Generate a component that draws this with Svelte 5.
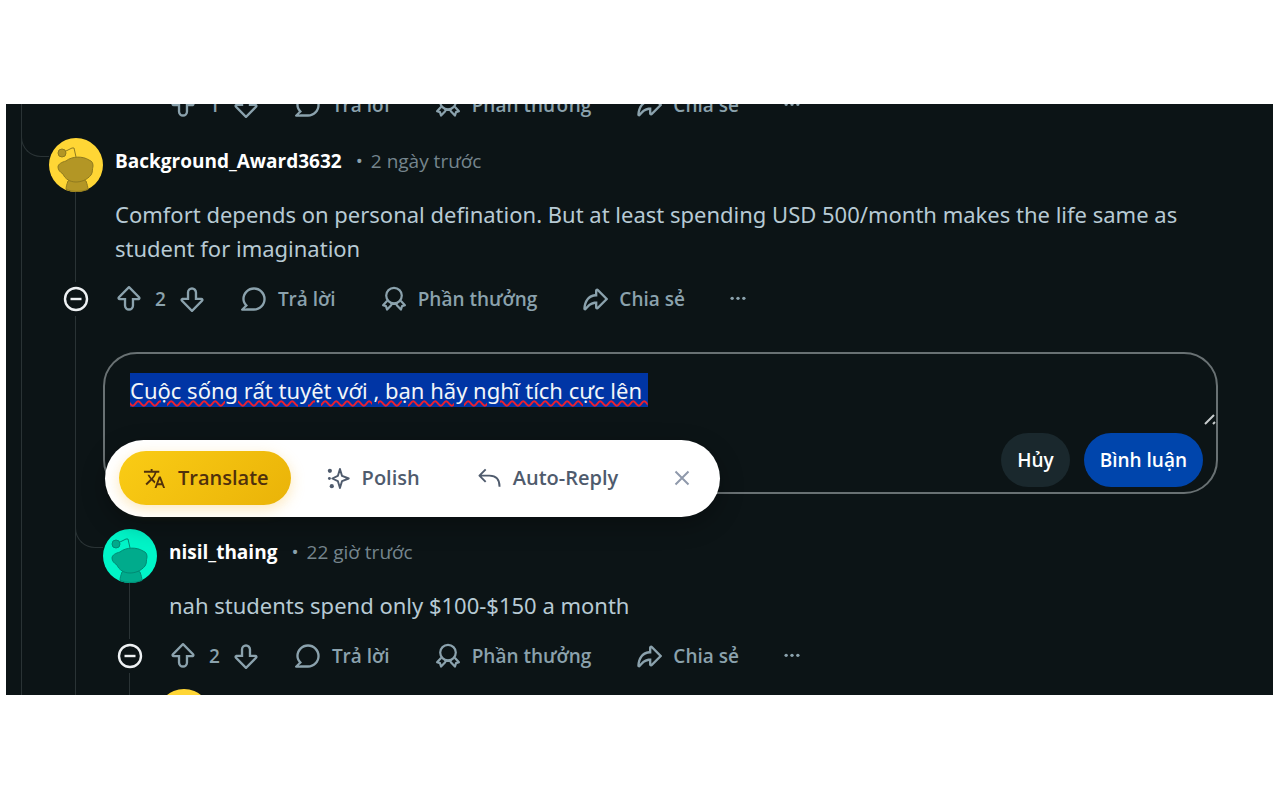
<script>
	import { onMount } from "svelte";

	const replies = [
		{ name: "Background_Award3632", time: "2 ngày trước", tone: "yellow", votes: 2 },
		{ name: "nisil_thaing", time: "22 giờ trước", tone: "teal", votes: 2 }
	];

	let draft = $state("Cuộc sống rất tuyệt với , bạn hãy nghĩ tích cực lên ");
	let showTools = $state(true);
	let input;

	onMount(() => {
		input.focus();
		input.select();
	});
</script>

<svelte:head>
	<title>Thread</title>
</svelte:head>

{#snippet avatar(tone)}
	<svg class="avatar {tone}" viewBox="0 0 54 54" aria-hidden="true">
		<circle class="disc" cx="27" cy="27" r="27" />
		<g class="snoo">
			<path d="M19 43c1-2 16-2 18 0 1 3 2 6 2 8.500q-11 4-22 0c0-3 1-5.500 2-8.500z" />
			<path d="M9 29c0-3 4-5 8-6 6-5 17-5 23-1 3 1 4 3 4 6-1 4 0 6-2 9-4 5-10 7-15 7-6 0-11-3-13-8-3-2-5-4-5-7z" />
			<circle cx="13" cy="15" r="4" />
			<path class="antenna" d="M17 13l6-3 2 0 2 9" />
		</g>
	</svg>
{/snippet}

{#snippet arrow(down)}
	<svg class="icon" class:down viewBox="0 0 20 20" aria-hidden="true">
		<path d="M10 19a3.966 3.966 0 01-3.960-3.962V10.980H2.838a1.731 1.731 0 01-1.605-1.073 1.734 1.734 0 01.377-1.895L9.364.254a.925.925 0 011.272 0l7.754 7.759c.498.499.646 1.242.376 1.894-.270.652-.900 1.073-1.605 1.073h-3.202v4.058A3.965 3.965 0 0110 19zM2.989 9.179H7.840v5.731c0 1.130.810 2.163 1.934 2.278a2.163 2.163 0 002.386-2.150V9.179h4.851L10 2.163 2.989 9.179z" />
	</svg>
{/snippet}

{#snippet actions(votes)}
	<div class="actions">
		<div class="votes">
			<button aria-label="Upvote">{@render arrow(false)}</button>
			<span>{votes}</span>
			<button aria-label="Downvote">{@render arrow(true)}</button>
		</div>
		<button class="action">
			<svg class="icon" viewBox="0 0 20 20" aria-hidden="true">
				<path d="M10 1a9 9 0 00-9 9c0 1.947.790 3.580 1.935 4.957L.231 17.661A.784.784 0 00.785 19H10a9 9 0 009-9 9 9 0 00-9-9zm0 16.200H6.162c-.994.004-1.907.053-3.045.144l-.076-.188a36.981 36.981 0 002.328-2.087l-1.050-1.263C3.297 12.576 2.800 11.331 2.800 10c0-3.970 3.230-7.200 7.200-7.200s7.200 3.230 7.200 7.200-3.230 7.200-7.200 7.200z" />
			</svg>
			Trả lời
		</button>
		<button class="action">
			<svg class="icon line" viewBox="0 0 20 20" aria-hidden="true">
				<circle cx="10" cy="7.400" r="6" />
				<path d="M4.800 11.300L1.600 14.800l2.200.700.900 2.600 3.500-3.700M15.200 11.300l3.200 3.500-2.200.700-.900 2.600-3.500-3.700M7.200 13.800h5.600" />
			</svg>
			Phần thưởng
		</button>
		<button class="action">
			<svg class="icon" viewBox="0 0 20 20" aria-hidden="true">
				<path d="M12.800 17.524l6.890-6.887a.9.9 0 000-1.273L12.800 2.477a1.640 1.640 0 00-1.782-.349 1.640 1.640 0 00-1.014 1.518v2.593C4.054 6.728 1.192 12.075 1 17.376a1.353 1.353 0 00.862 1.320 1.350 1.350 0 001.531-.364l.334-.381c1.705-1.944 3.323-3.791 6.277-4.103v2.509c0 .667.398 1.262 1.014 1.518a1.638 1.638 0 001.783-.349zm-.994-1.548V12h-.9c-3.969 0-6.162 2.100-8.001 4.161.514-4.011 2.823-8.160 8-8.160h.9V4.024L17.784 10l-5.977 5.976z" />
			</svg>
			Chia sẻ
		</button>
		<button class="more" aria-label="More">
			<svg class="icon" viewBox="0 0 20 20" aria-hidden="true">
				<circle cx="5.500" cy="9.500" r="1.300" />
				<circle cx="10" cy="9.500" r="1.300" />
				<circle cx="14.500" cy="9.500" r="1.300" />
			</svg>
		</button>
	</div>
{/snippet}

{#snippet head(reply)}
	<header>
		<a href="#user">{reply.name}</a>
		<span class="dot">•</span>
		<time>{reply.time}</time>
	</header>
{/snippet}

{#snippet collapse()}
	<button class="collapse" aria-label="Collapse">
		<svg viewBox="0 0 26 26" aria-hidden="true">
			<circle cx="13" cy="13" r="11" />
			<path d="M7.500 13h11" />
		</svg>
	</button>
{/snippet}

<main class="thread">
	<div class="previous">
		{@render actions(1)}
	</div>

	<article class="comment">
		{@render avatar(replies[0].tone)}
		<div class="content">
			{@render head(replies[0])}
			<p>Comfort depends on personal defination. But at least spending USD 500/month makes the life same as student for imagination</p>
		</div>
		{@render collapse()}
		{@render actions(replies[0].votes)}

		<div class="children">
			<form class="composer" onsubmit={(e) => e.preventDefault()}>
				<textarea bind:this={input} bind:value={draft} aria-label="Bình luận" spellcheck="false"></textarea>
				<svg class="grip" viewBox="0 0 12 12" aria-hidden="true">
					<path d="M1 11L10 2M9 11l2-2" />
				</svg>
				<div class="buttons">
					<button type="button" class="cancel">Hủy</button>
					<button type="submit" class="submit">Bình luận</button>
				</div>

				{#if showTools}
					<div class="tools">
						<button type="button" class="tool primary">
							<svg viewBox="0 0 24 24" aria-hidden="true">
								<path class="solid" d="M12.870 15.070l-2.540-2.510.030-.030A17.520 17.520 0 0014.070 6H17V4h-7V2H8v2H1v2h11.170C11.500 7.920 10.440 9.750 9 11.350 8.070 10.320 7.300 9.190 6.690 8h-2c.730 1.630 1.730 3.170 2.980 4.560l-5.090 5.020L4 19l5-5 3.110 3.110.760-2.040zM18.500 10h-2L12 22h2l1.120-3h4.750L21 22h2l-4.500-12zm-2.620 7l1.620-4.330L19.120 17h-3.240z" />
							</svg>
							Translate
						</button>
						<button type="button" class="tool">
							<svg viewBox="0 0 24 24" aria-hidden="true">
								<path d="M13.500 2l2.200 7.300 7 2.700-7 2.700-2.200 7.300-2.200-7.300L5.500 12l5.800-2.700z" />
								<circle class="solid" cx="3" cy="4" r="2.200" />
								<circle class="solid" cx="2.500" cy="12" r="1.500" />
								<circle class="solid" cx="5" cy="20" r="2.200" />
							</svg>
							Polish
						</button>
						<button type="button" class="tool">
							<svg viewBox="0 0 24 24" aria-hidden="true">
								<path d="M8 2.500L1.500 9 8 15.500M1.500 9H12c6.500 0 10.500 4 10.500 11.500" />
							</svg>
							Auto-Reply
						</button>
						<button type="button" class="close" aria-label="Close" onclick={() => (showTools = false)}>
							<svg viewBox="0 0 16 16" aria-hidden="true">
								<path d="M1.500 1.500l13 13M14.500 1.500l-13 13" />
							</svg>
						</button>
					</div>
				{/if}
			</form>

			<article class="comment">
				{@render avatar(replies[1].tone)}
				<div class="content">
					{@render head(replies[1])}
					<p>nah students spend only $100-$150 a month</p>
				</div>
				{@render collapse()}
				{@render actions(replies[1].votes)}

				<div class="children next">
					{@render avatar("yellow")}
				</div>
			</article>
		</div>
	</article>
</main>

<style>
	:global(body) {
		margin: 0;
		background: #fff;
	}

	.thread {
		--bg: #0c1416;
		--rail: #2a3335;
		--muted: #8ba2ad;
		position: relative;
		margin: 104px 7px 0 6px;
		padding: 0 55px 0 43px;
		background: var(--bg);
		color: #b7cad4;
		font-family: "Noto Sans", "Open Sans", sans-serif;
		font-size: 22px;
		line-height: 34px;
		overflow: hidden;
	}

	.thread::before {
		content: "";
		position: absolute;
		left: 15px;
		top: 0;
		bottom: 0;
		width: 1px;
		background: var(--rail);
	}

	button {
		display: flex;
		align-items: center;
		padding: 0;
		border: 0;
		background: none;
		color: inherit;
		font: inherit;
		cursor: pointer;
	}

	.previous {
		margin-top: -32px;
		padding-left: 108px;
	}

	.comment {
		position: relative;
		display: grid;
		grid-template-columns: 54px 1fr;
	}

	/* rail under the avatar and the elbow that joins it to the parent */
	.comment::before {
		content: "";
		position: absolute;
		left: 26px;
		top: 54px;
		bottom: 0;
		width: 1px;
		background: var(--rail);
	}

	.comment::after {
		content: "";
		position: absolute;
		left: -28px;
		top: -2px;
		width: 27px;
		height: 20px;
		border-left: 1px solid var(--rail);
		border-bottom: 1px solid var(--rail);
		border-bottom-left-radius: 20px;
	}

	.avatar {
		position: relative;
		display: block;
		width: 54px;
		height: 54px;
	}

	.yellow .disc {
		fill: #ffd635;
	}

	.yellow .snoo {
		fill: #b39625;
		stroke: #8f7a1f;
	}

	.teal .disc {
		fill: #00f5c8;
	}

	.teal .snoo {
		fill: #00ab8c;
		stroke: #008a74;
	}

	.snoo .antenna {
		fill: none;
	}

	.content {
		padding-left: 12px;
	}

	header {
		display: flex;
		align-items: center;
		height: 46px;
		font-family: "Open Sans", "Noto Sans", sans-serif;
		font-size: 19px;
		color: #75858d;
	}

	header a {
		color: #fff;
		font-weight: 700;
		text-decoration: none;
	}

	.dot {
		margin: 0 8px 0 14px;
		color: var(--muted);
	}

	p {
		margin: 13px 0 1px;
	}

	.actions {
		display: flex;
		align-items: center;
		gap: 11px;
		height: 66px;
		padding-left: 5px;
		color: var(--muted);
		font-family: "Open Sans", "Noto Sans", sans-serif;
		font-size: 19px;
		font-weight: 600;
		white-space: nowrap;
	}

	.votes {
		display: flex;
		align-items: center;
		gap: 13px;
		padding: 0 8px;
	}

	.action {
		gap: 11px;
		padding: 0 17px;
	}

	.more {
		padding: 0 12px;
	}

	.icon {
		width: 26px;
		height: 26px;
		fill: currentColor;
	}

	.icon.down {
		transform: rotate(180deg);
	}

	.icon.line {
		fill: none;
		stroke: currentColor;
		stroke-width: 1.7;
		stroke-linejoin: round;
	}

	.collapse {
		position: relative;
		align-self: center;
		justify-self: center;
		padding: 4px 0;
		background: var(--bg);
	}

	.collapse svg {
		width: 26px;
		height: 26px;
		fill: none;
		stroke: #eef1f3;
		stroke-width: 2.4;
	}

	.children {
		grid-column: 2;
	}

	.next {
		height: 6px;
		overflow: hidden;
	}

	.composer {
		position: relative;
		margin: 20px 0 35px;
		border: 2px solid #697173;
		border-radius: 34px;
	}

	textarea {
		display: block;
		box-sizing: border-box;
		width: 100%;
		height: 71px;
		padding: 19px 25px 0;
		border: 0;
		outline: 0;
		resize: none;
		background: none;
		color: #f2f6f8;
		font: inherit;
		text-underline-offset: 2px;
		text-decoration-skip-ink: none;
		overflow: hidden;
	}

	textarea::selection {
		background: #0035a5;
		color: #f2f6f8;
		text-decoration: underline wavy #f0202c 2px;
	}

	.grip {
		position: absolute;
		top: 59px;
		right: 0;
		width: 12px;
		height: 12px;
		fill: none;
		stroke: #c8cccd;
		stroke-width: 2;
	}

	.buttons {
		display: flex;
		justify-content: flex-end;
		gap: 14px;
		padding: 8px 13px 5px;
	}

	.buttons button {
		height: 54px;
		padding: 0 16px;
		border-radius: 27px;
		color: #fff;
		font-family: "Open Sans", "Noto Sans", sans-serif;
		font-size: 19px;
		font-weight: 600;
	}

	.buttons .cancel {
		background: #1a282d;
	}

	.buttons .submit {
		background: #0045ac;
	}

	.tools {
		position: absolute;
		left: 0;
		top: 86px;
		z-index: 1;
		display: flex;
		align-items: center;
		gap: 12px;
		padding: 11px 8px 12px 14px;
		border-radius: 39px;
		background: #fff;
		box-shadow: 0 8px 24px rgba(0, 0, 0, 0.3);
		white-space: nowrap;
	}

	.tool {
		gap: 12px;
		height: 54px;
		padding: 0 22px 0 24px;
		border-radius: 27px;
		color: #4f5b6d;
		font-family: "Open Sans", "Noto Sans", sans-serif;
		font-size: 20px;
		font-weight: 600;
	}

	.tool svg {
		width: 23px;
		height: 23px;
		fill: none;
		stroke: currentColor;
		stroke-width: 2;
		stroke-linejoin: round;
	}

	.tool .solid {
		fill: currentColor;
		stroke: none;
	}

	.tool.primary {
		background: linear-gradient(135deg, #facc15, #eab308);
		box-shadow: 0 4px 14px rgba(250, 190, 60, 0.35);
		color: #50300c;
	}

	.close {
		justify-content: center;
		width: 60px;
		height: 54px;
	}

	.close svg {
		width: 16px;
		height: 16px;
		fill: none;
		stroke: #8f99ab;
		stroke-width: 2;
	}
</style>
